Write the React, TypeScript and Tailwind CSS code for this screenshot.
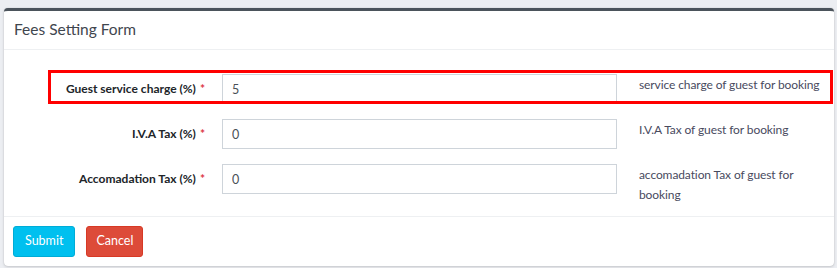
const rows = [
  { label: 'Guest service charge (%)', value: '5', help: 'service charge of guest for booking', marked: true },
  { label: 'I.V.A Tax (%)', value: '0', help: 'I.V.A Tax of guest for booking', marked: false },
  { label: 'Accomadation Tax (%)', value: '0', help: 'accomadation Tax of guest for booking', marked: false },
];

export default function App() {
  return (
    <div className="min-h-[268px] bg-[#eceef2] pt-2 pl-1 pr-[3px] font-['Lato',sans-serif]">
      <div className="rounded-sm border-t-[3px] border-[#4b535b] bg-white shadow-[0_0_1px_rgba(0,0,0,0.2),0_1px_3px_rgba(0,0,0,0.15)]">
        {/* Header */}
        <div className="flex h-[39px] items-center border-b border-[#eef0f2] px-[10px]">
          <h3 className="text-[15.5px] text-[#3f464e]">Fees Setting Form</h3>
        </div>

        {/* Form rows */}
        <div className="flex flex-col gap-[15px] pt-[24px] pb-[11px]">
          {rows.map((row, i) => (
            <div key={i} className="relative flex items-start">
              {row.marked && (
                <div className="absolute -top-1 left-[44px] h-[34px] w-[785px] border-[3px] border-[#ff0000]" />
              )}
              <label className="flex h-[30px] w-[218px] shrink-0 items-center justify-end pr-[17px] text-[12px] font-bold text-[#212529]">
                {row.label}
                <span className="ml-1 text-[#dc3545]">*</span>
              </label>
              <input
                readOnly
                value={row.value}
                className="h-[30px] w-[395px] shrink-0 border border-[#ced4da] px-[9px] text-[12.5px] text-[#495057] outline-none"
              />
              <p className="ml-[22px] w-[186px] pt-px text-[12px] leading-[20px] tracking-[-0.1px] text-[#484a5e]">{row.help}</p>
            </div>
          ))}
        </div>

        {/* Footer */}
        <div className="flex gap-[11px] border-t border-[#eef0f2] px-[9px] pt-[9px] pb-[9px]">
          <button className="h-[31px] rounded-[3px] border border-[#00acd6] bg-[#00c0ef] px-[11px] text-[12.5px] text-white">
            Submit
          </button>
          <button className="h-[31px] rounded-[3px] border border-[#d73925] bg-[#dd4b39] px-[9px] text-[12.5px] text-white">
            Cancel
          </button>
        </div>
      </div>
    </div>
  );
}
